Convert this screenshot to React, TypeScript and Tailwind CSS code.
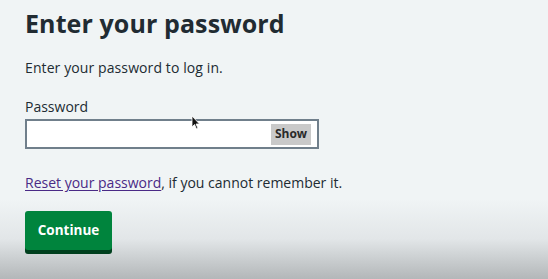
import React from "react";

export default function App() {
  return (
    <div
      className="relative w-[548px] h-[279px] overflow-hidden bg-[#f0f4f5] text-[#212b32]"
      style={{ fontFamily: '"Open Sans", "Noto Sans", sans-serif' }}
    >
      <div className="absolute inset-x-0 bottom-0 h-[80px] bg-gradient-to-b from-[#f0f4f5] via-[#e2e6e8] to-[#b3b7b9]" />
      <div className="relative flex flex-col pl-[25px] pt-[6px]">
        <h1 className="text-[25px] leading-[34px] font-bold tracking-[0.1px]">Enter your password</h1>
        <p className="mt-[18px] text-[14px] leading-[20px] tracking-[0.1px]">Enter your password to log in.</p>
        <label className="mt-[19px] text-[14px] leading-[20px]">Password</label>
        <div className="mt-[2px] flex h-[30px] w-[294px] items-center justify-end border-2 border-[#707f8b] bg-white pr-[6px]">
          <span className="flex h-[21px] w-[40px] items-center justify-center bg-[#c9c9c9] text-[12px] font-bold text-[#2a2a2a]">
            Show
          </span>
        </div>
        <p className="mt-[24px] text-[14px] leading-[20px]">
          <span className="text-[#4a2a86] underline underline-offset-2">Reset your password</span>, if you cannot remember it.
        </p>
        <div className="mt-[18px] flex">
          <span className="flex h-[39px] w-[87px] items-center justify-center rounded-[3px] bg-[#00843d] text-[13.5px] font-bold text-white shadow-[0_4px_0_#00401e]">
            Continue
          </span>
        </div>
      </div>
      <svg className="absolute left-[191px] top-[115px]" width="10" height="15" viewBox="0 0 10 15">
        <path d="M1 1 L1 12 L3.5 9.5 L5.5 14 L7 13.3 L5 9 L8.5 9 Z" fill="#111" stroke="#fff" strokeWidth="0.8" />
      </svg>
    </div>
  );
}
